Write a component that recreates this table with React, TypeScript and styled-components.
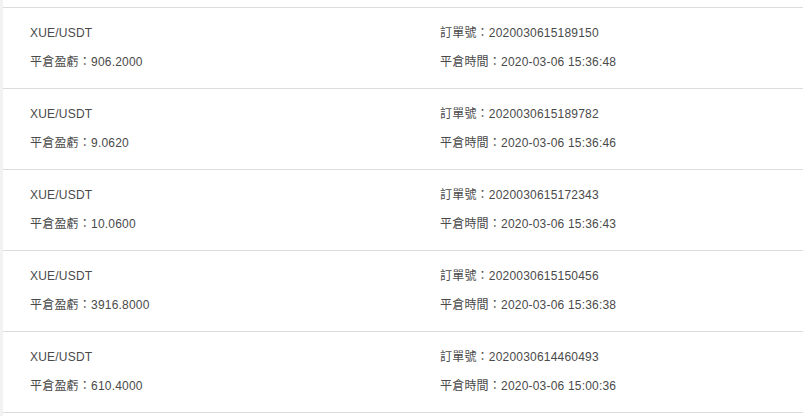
import styled, { createGlobalStyle } from 'styled-components';

type Order = {
  pair: string;
  profit: string;
  orderNo: string;
  closedAt: string;
};

const orders: Order[] = [
  { pair: 'XUE/USDT', profit: '906.2000', orderNo: '2020030615189150', closedAt: '2020-03-06 15:36:48' },
  { pair: 'XUE/USDT', profit: '9.0620', orderNo: '2020030615189782', closedAt: '2020-03-06 15:36:46' },
  { pair: 'XUE/USDT', profit: '10.0600', orderNo: '2020030615172343', closedAt: '2020-03-06 15:36:43' },
  { pair: 'XUE/USDT', profit: '3916.8000', orderNo: '2020030615150456', closedAt: '2020-03-06 15:36:38' },
  { pair: 'XUE/USDT', profit: '610.4000', orderNo: '2020030614460493', closedAt: '2020-03-06 15:00:36' },
];

const GlobalStyle = createGlobalStyle`
  html, body {
    margin: 0;
    padding: 0;
    background: #f2f2f2;
    overflow: hidden;
  }

  body {
    font-family: 'Liberation Sans', Arial, 'Noto Sans CJK TC', sans-serif;
  }
`;

const App = () => {
  return (
    <>
      <GlobalStyle />
      <List>
        {orders.map((o) => (
          <Row key={o.orderNo}>
            <Column>
              <Line>{o.pair}</Line>
              <Line>平倉盈虧：{o.profit}</Line>
            </Column>
            <Column>
              <Line>訂單號：{o.orderNo}</Line>
              <Line>平倉時間：{o.closedAt}</Line>
            </Column>
          </Row>
        ))}
      </List>
    </>
  );
};

const List = styled.div`
  margin-left: 3px;
  height: 416px;
  padding-top: 7px;
  box-sizing: border-box;
  background: #fff;
`;

const Row = styled.div`
  display: grid;
  grid-template-columns: 410px 1fr;
  align-content: start;
  height: 81px;
  padding: 15px 0 0 27px;
  box-sizing: border-box;
  border-top: 1px solid #dcdcdc;

  &:last-child {
    height: 82px;
    border-bottom: 1px solid #dcdcdc;
  }
`;

const Column = styled.div`
  display: flex;
  flex-direction: column;
  gap: 9px;
`;

const Line = styled.div`
  font-size: 12px;
  line-height: 20px;
  letter-spacing: 0.2px;
  color: #4a4a4a;
  white-space: nowrap;
`;

export default App;
